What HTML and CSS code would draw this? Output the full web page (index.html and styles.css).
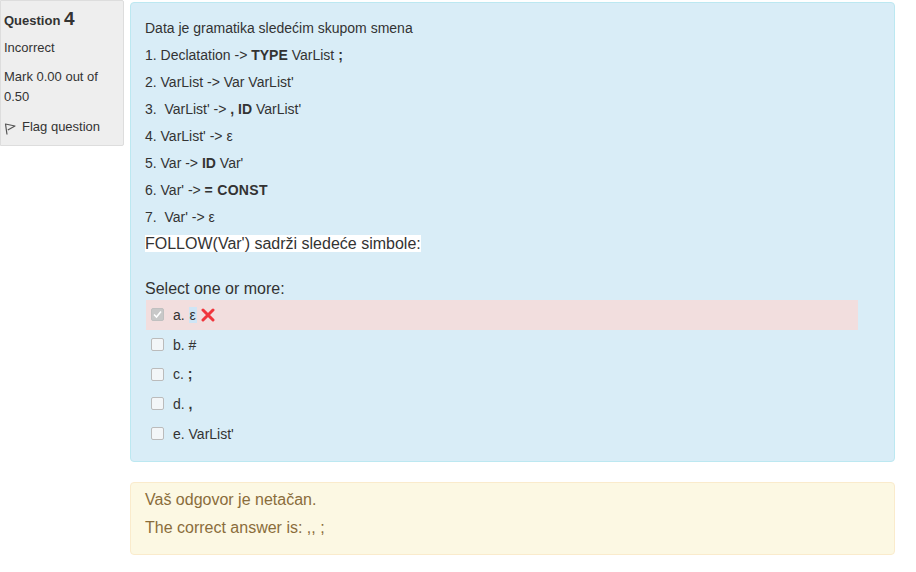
FILE: index.html
```html
<!DOCTYPE html>
<html>
<head>
<meta charset="utf-8">
<link rel="stylesheet" href="styles.css">
</head>
<body>
<div class="que">
  <div class="info">
    <h3 class="no">Question <span class="qno">4</span></h3>
    <div class="state">Incorrect</div>
    <div class="grade">Mark 0.00 out of 0.50</div>
    <div class="flag">
      <svg class="flagicon" width="13" height="13" viewBox="0 0 13 13"><path d="M3 12.5 L1.5 2 L11 4 L3.8 8" fill="none" stroke="#555" stroke-width="1.2" stroke-linejoin="round"/></svg>
      <span>Flag question</span>
    </div>
  </div>
  <div class="content">
    <div class="formulation">
      <div class="qtext">
        <p>Data je gramatika sledećim skupom smena</p>
        <p>1. Declatation -&gt; <b>TYPE</b> VarList <b>;</b></p>
        <p>2. VarList -&gt; Var VarList'</p>
        <p>3.&nbsp; VarList' -&gt; <b>, ID</b> VarList'</p>
        <p>4. VarList' -&gt; ε</p>
        <p>5. Var -&gt; <b>ID</b> Var'</p>
        <p>6. Var' -&gt; <b class="wide">= CONST</b></p>
        <p>7.&nbsp; Var' -&gt; ε</p>
        <p class="follow"><span>FOLLOW(Var') sadrži sledeće simbole:</span></p>
      </div>
      <div class="prompt">Select one or more:</div>
      <div class="answer">
        <div class="opt incorrect">
          <span class="cb checked"><svg width="9" height="9" viewBox="0 0 9 9"><path d="M1 4.5 L3.5 7 L8 1.5" fill="none" stroke="#fff" stroke-width="1.6"/></svg></span>
          <span class="lbl">a. <span class="sel">ε</span></span>
          <svg class="xicon" width="14" height="14" viewBox="0 0 14 14"><path d="M2 2 L12 12 M12 2 L2 12" stroke="#f0353c" stroke-width="3" stroke-linecap="round"/></svg>
        </div>
        <div class="opt"><span class="cb"></span><span class="lbl">b. #</span></div>
        <div class="opt"><span class="cb"></span><span class="lbl">c. <b>;</b></span></div>
        <div class="opt"><span class="cb"></span><span class="lbl">d. <b>,</b></span></div>
        <div class="opt"><span class="cb"></span><span class="lbl">e. VarList'</span></div>
      </div>
    </div>
    <div class="outcome">
      <div>Vaš odgovor je netačan.</div>
      <div>The correct answer is: ,, ;</div>
    </div>
  </div>
</div>
</body>
</html>
```

FILE: styles.css
```css
html, body {
  margin: 0;
  padding: 0;
  background: #fff;
}
body {
  font-family: "Liberation Sans", Arial, sans-serif;
  color: #333;
}
.que {
  display: flex;
  align-items: flex-start;
  padding-right: 21px;
}
.info {
  box-sizing: border-box;
  width: 124px;
  flex: none;
  background: #eee;
  border: 1px solid #ddd;
  border-radius: 0 2px 2px 0;
  padding: 8px 6px 10px 3px;
  margin-right: 6px;
  height: 146px;
}
.info h3 {
  margin: 0;
  font-size: 13px;
  font-weight: bold;
  line-height: 20px;
  color: #333;
}
.qno {
  font-size: 19px;
  font-weight: bold;
}
.state {
  font-size: 13px;
  line-height: 20px;
  margin-top: 7px;
}
.grade {
  font-size: 13px;
  line-height: 20px;
  margin-top: 9px;
}
.flag {
  font-size: 13px;
  line-height: 20px;
  margin-top: 10px;
  display: flex;
  align-items: center;
  gap: 5px;
}
.flagicon {
  margin-top: 3px;
}
.content {
  flex: 1;
  min-width: 0;
}
.formulation {
  margin-top: 2px;
  background: #d9edf7;
  border: 1px solid #bce8f1;
  border-radius: 4px;
  padding: 15px 14px 13px 14px;
}
.qtext p {
  margin: 0 0 7px 0;
  font-size: 14px;
  line-height: 20px;
}
.qtext b.wide {
  letter-spacing: 0.3px;
}
.qtext p.follow {
  font-size: 16px;
  margin: 0;
}
.follow span {
  background: #fff;
}
.prompt {
  font-size: 16px;
  line-height: 20px;
  margin-top: 25px;
  margin-bottom: 1px;
}
.answer {
  margin: 0 22px 0 1px;
}
.opt {
  height: 29.7px;
  display: flex;
  align-items: center;
  padding-left: 5px;
  font-size: 14px;
}
.opt.incorrect {
  background: #f2dede;
}
.cb {
  box-sizing: border-box;
  width: 13px;
  height: 13px;
  border: 1px solid #bbb;
  border-radius: 2px;
  background: #f3f6f8;
  margin-right: 9px;
  display: flex;
  align-items: center;
  justify-content: center;
}
.cb.checked {
  background: #c8c8c8;
  border-color: #c0c0c0;
}
.lbl {
  color: #333;
}
.sel {
  background: #cfe5f5;
  padding: 0 1px;
}
.xicon {
  margin-left: 4px;
}
.outcome {
  margin-top: 20px;
  background: #fcf8e3;
  border: 1px solid #faebcc;
  border-radius: 4px;
  color: #8a6d3b;
  padding: 3px 14px 12px 14px;
  font-size: 16px;
  line-height: 28px;
}
```
